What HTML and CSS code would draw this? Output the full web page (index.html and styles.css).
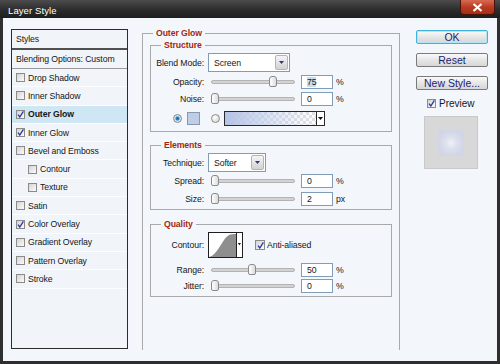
FILE: index.html
```
<!DOCTYPE html>
<html lang="en">
<head>
  <meta charset="UTF-8" />
  <title>Layer Style</title>
  <link rel="stylesheet" href="styles.css">
</head>
<body>
  <div class="window">
    <div class="titlebar">
      <span class="title">Layer Style</span>
      <div class="close">
        <svg width="11" height="9" viewBox="0 0 11 9"><path d="M1.5 1 L9.5 8 M9.5 1 L1.5 8" stroke="#fff" stroke-width="2.2"/></svg>
      </div>
    </div>

    <div class="client">
      <!-- list of effects -->
      <div class="styles-panel">
        <div class="panel-head">Styles</div>
        <div class="panel-blend">Blending Options: Custom</div>
        <ul class="effects">
          <li><span class="cb"></span>Drop Shadow</li>
          <li><span class="cb"></span>Inner Shadow</li>
          <li class="active"><span class="cb checked"><svg width="7" height="7" viewBox="0 0 7 7"><path d="M1 3.6 L2.8 6 L6.4 0.4"/></svg></span>Outer Glow</li>
          <li><span class="cb checked"><svg width="7" height="7" viewBox="0 0 7 7"><path d="M1 3.6 L2.8 6 L6.4 0.4"/></svg></span>Inner Glow</li>
          <li><span class="cb"></span>Bevel and Emboss</li>
          <li class="sub-item"><span class="cb"></span>Contour</li>
          <li class="sub-item"><span class="cb"></span>Texture</li>
          <li><span class="cb"></span>Satin</li>
          <li><span class="cb checked"><svg width="7" height="7" viewBox="0 0 7 7"><path d="M1 3.6 L2.8 6 L6.4 0.4"/></svg></span>Color Overlay</li>
          <li><span class="cb"></span>Gradient Overlay</li>
          <li><span class="cb"></span>Pattern Overlay</li>
          <li><span class="cb"></span>Stroke</li>
        </ul>
      </div>

      <!-- settings -->
      <div class="group main">
        <div class="legend">Outer Glow</div>

        <div class="group sub structure">
          <div class="legend">Structure</div>
          <div class="row tall r-blend">
            <span class="label">Blend Mode:</span>
            <div class="select wide">Screen<span class="select-btn"><svg width="5" height="3" viewBox="0 0 5 3"><path d="M0 0 H5 L2.5 3Z" fill="#2c3a7a"/></svg></span></div>
          </div>
          <div class="row r-opacity">
            <span class="label">Opacity:</span>
            <div class="slider"><div class="track"><span class="thumb" style="left: 74%"></span></div></div>
            <div class="num"><span class="sel">75</span></div>
            <span class="unit">%</span>
          </div>
          <div class="row r-noise">
            <span class="label">Noise:</span>
            <div class="slider"><div class="track"><span class="thumb" style="left: 0%"></span></div></div>
            <div class="num">0</div>
            <span class="unit">%</span>
          </div>
          <div class="row color-row">
            <span class="radio on"></span>
            <span class="swatch"></span>
            <span class="radio"></span>
            <div class="gradient"><span class="gradient-fill"></span><span class="gradient-btn"><svg width="5" height="3" viewBox="0 0 5 3"><path d="M0 0 H5 L2.5 3Z" fill="#111"/></svg></span></div>
          </div>
        </div>

        <div class="group sub elements">
          <div class="legend">Elements</div>
          <div class="row tall r-tech">
            <span class="label">Technique:</span>
            <div class="select narrow">Softer<span class="select-btn"><svg width="5" height="3" viewBox="0 0 5 3"><path d="M0 0 H5 L2.5 3Z" fill="#2c3a7a"/></svg></span></div>
          </div>
          <div class="row r-spread">
            <span class="label">Spread:</span>
            <div class="slider"><div class="track"><span class="thumb" style="left: 0%"></span></div></div>
            <div class="num">0</div>
            <span class="unit">%</span>
          </div>
          <div class="row r-size">
            <span class="label">Size:</span>
            <div class="slider"><div class="track"><span class="thumb" style="left: 0%"></span></div></div>
            <div class="num">2</div>
            <span class="unit">px</span>
          </div>
        </div>

        <div class="group sub quality">
          <div class="legend">Quality</div>
          <div class="row contour-row">
            <span class="label">Contour:</span>
            <div class="contour">
              <svg width="33" height="24" viewBox="0 0 33 24">
                <rect width="33" height="24" fill="#fff"/>
                <path d="M0 24 C 9 22, 13 6, 20 2 C 22 1, 24 1, 27 1 L27 24 Z" fill="#8e8e8e"/>
                <path d="M27.5 0 V24" stroke="#222" stroke-width="1"/>
                <path d="M28.8 10 H32 L30.4 12.2Z" fill="#111"/>
              </svg>
            </div>
            <span class="cb checked aa"><svg width="7" height="7" viewBox="0 0 7 7"><path d="M1 3.6 L2.8 6 L6.4 0.4"/></svg></span>
            <span class="aa-text">Anti-aliased</span>
          </div>
          <div class="row r-range">
            <span class="label">Range:</span>
            <div class="slider"><div class="track"><span class="thumb" style="left: 49%"></span></div></div>
            <div class="num">50</div>
            <span class="unit">%</span>
          </div>
          <div class="row r-jitter">
            <span class="label">Jitter:</span>
            <div class="slider"><div class="track"><span class="thumb" style="left: 0%"></span></div></div>
            <div class="num">0</div>
            <span class="unit">%</span>
          </div>
        </div>
      </div>

      <!-- buttons -->
      <div class="actions">
        <div class="btn default">OK</div>
        <div class="btn">Reset</div>
        <div class="btn">New Style...</div>
        <div class="preview-check">
          <span class="cb checked"><svg width="7" height="7" viewBox="0 0 7 7"><path d="M1 3.6 L2.8 6 L6.4 0.4"/></svg></span>
          <span>Preview</span>
        </div>
        <div class="preview">
          <div class="preview-swatch"></div>
        </div>
      </div>
    </div>
  </div>
</body>
</html>
```

FILE: styles.css
```
body {
  margin: 0;
  font-family: "Liberation Sans", Arial, sans-serif;
  font-size: 8.7px;
  letter-spacing: -0.1px;
  color: #161616;
}

.window {
  width: 500px;
  height: 364px;
  display: flex;
  flex-direction: column;
  background: #2e2e2e;
}

.titlebar {
  height: 18px;
  display: flex;
  justify-content: space-between;
  align-items: flex-start;
  background: linear-gradient(#4c4c4c, #2c2c2c 55%, #1d1d1d);
}

.title {
  color: #fff;
  font-size: 9.5px;
  padding: 5px 0 0 8px;
  letter-spacing: 0.1px;
}

.close {
  width: 35px;
  height: 15px;
  margin-right: 5px;
  box-sizing: border-box;
  border: 1px solid #4a1208;
  border-top: none;
  border-radius: 0 0 4px 4px;
  background: linear-gradient(#d86a52, #b93b22 50%, #a52d17);
  display: flex;
  align-items: center;
  justify-content: center;
}

.client {
  flex: 1;
  margin: 0 3px 3px 3px;
  background: #f3f7fb;
  display: flex;
  align-items: flex-start;
}

/* left list */

.styles-panel {
  width: 117px;
  height: 320px;
  margin: 11px 0 0 8px;
  box-sizing: border-box;
  border: 1px solid #2c2c2c;
  background: #f1f5fa;
}

.panel-head,
.panel-blend {
  height: 18px;
  line-height: 18px;
  padding-left: 4px;
}

.panel-head {
  border-bottom: 2px solid #505050;
}

.panel-blend {
  border-bottom: 1px solid #9a9a9a;
}

.effects {
  list-style: none;
  margin: 0;
  padding: 0;
}

.effects li {
  height: 17.3px;
  display: flex;
  align-items: center;
  padding-left: 4px;
  border-bottom: 1px solid #fdfeff;
}

.effects li.active {
  background: #cfe7f4;
  font-weight: bold;
}

.effects li.sub-item {
  padding-left: 16px;
}

.cb {
  width: 9px;
  height: 9px;
  box-sizing: border-box;
  border: 1px solid #8a8a8a;
  background: linear-gradient(135deg, #d4d4d4, #fbfbfb);
  margin-right: 3px;
  display: flex;
  align-items: center;
  justify-content: center;
  flex: none;
}

.cb svg path {
  fill: none;
  stroke: #2838a0;
  stroke-width: 1.3;
}

/* groups */

.group {
  box-sizing: border-box;
  border: 1px solid #a9a9a9;
}

.legend {
  width: fit-content;
  height: 12px;
  line-height: 12px;
  margin-top: -7px;
  padding: 0 3px;
  background: #f3f7fb;
  color: #a3260f;
  font-weight: bold;
}

.main {
  width: 258px;
  height: 317px;
  margin: 15px 0 0 14px;
  padding: 0 7px;
  border-bottom: none;
}

.main > .legend {
  margin-left: 3px;
}

.sub .legend {
  margin-left: 10px;
}

.structure {
  margin-top: 6px;
  padding-bottom: 5px;
}

.elements {
  margin-top: 13px;
  padding-bottom: 3px;
}

.quality {
  margin-top: 14px;
  padding-bottom: 3px;
}

.row {
  display: flex;
  align-items: center;
  height: 14px;
}

.row.tall {
  height: 19px;
}

.r-blend, .r-tech, .contour-row { margin-top: 2px; }
.r-opacity, .r-noise { margin-top: 3px; }
.r-spread { margin-top: 2px; }
.r-size { margin-top: 4px; }
.r-range { margin-top: 5px; }
.r-jitter { margin-top: 2px; }

.label {
  width: 53px;
  margin-right: 4px;
  text-align: right;
}

.select {
  height: 19px;
  box-sizing: border-box;
  border: 1px solid #7f9db9;
  background: #fff;
  display: flex;
  align-items: center;
  justify-content: space-between;
  padding-left: 5px;
}

.select.wide { width: 82px; }
.select.narrow { width: 58px; }

.select-btn {
  width: 13px;
  height: 15px;
  margin-right: 1px;
  box-sizing: border-box;
  border: 1px solid #a8b6c8;
  border-radius: 2px;
  background: linear-gradient(#f5f5f5, #d2d2d2);
  display: flex;
  align-items: center;
  justify-content: center;
}

.slider {
  width: 93px;
}

.track {
  position: relative;
  height: 4px;
  margin: 0 6px 0 3px;
  box-sizing: border-box;
  border: 1px solid #b3b3b3;
  border-radius: 2px;
  background: #d3d3d3;
}

.thumb {
  position: absolute;
  top: -5px;
  width: 8px;
  height: 11px;
  margin-left: -4px;
  box-sizing: border-box;
  border: 1px solid #8a8a8a;
  border-radius: 3px 3px 2px 2px;
  background: linear-gradient(90deg, #fff, #dcdcdc);
}

.r-noise .thumb, .r-spread .thumb, .r-size .thumb, .r-jitter .thumb {
  margin-left: -1px;
}

.num {
  width: 32px;
  height: 14px;
  box-sizing: border-box;
  border: 1px solid #7f9db9;
  background: #fff;
  padding-left: 5px;
  line-height: 12px;
}

.sel {
  background: #c3def4;
}

.unit {
  margin-left: 3px;
}

.color-row {
  height: 16px;
  margin-top: 4px;
}

.radio {
  width: 9px;
  height: 9px;
  box-sizing: border-box;
  border: 1px solid #8a8a8a;
  border-radius: 50%;
  background: radial-gradient(circle at 35% 35%, #fff, #cfcfcf);
  margin-left: 11px;
}

.radio.on {
  margin-left: 22px;
  background: radial-gradient(circle, #0a5fa8 0, #2b8ad0 30%, #dfe8ef 55%, #b9c2cc);
}

.swatch {
  width: 13px;
  height: 13px;
  box-sizing: border-box;
  border: 1px solid #8b97aa;
  background: #bfcde6;
  margin-left: 5px;
}

.gradient {
  width: 101px;
  height: 15px;
  margin-left: 4px;
  box-sizing: border-box;
  border: 1px solid #2a2a2a;
  display: flex;
  background: repeating-conic-gradient(#e1e1e1 0 25%, #fff 0 50%) 0 0 / 6px 6px;
}

.gradient-fill {
  flex: 1;
  background: linear-gradient(90deg, #b4c3e6, rgba(190, 205, 235, 0.6) 45%, rgba(255, 255, 255, 0));
}

.gradient-btn {
  width: 7px;
  border-left: 1px solid #2a2a2a;
  background: #fff;
  display: flex;
  align-items: center;
  justify-content: center;
}

.contour-row {
  height: 26px;
}

.contour {
  width: 35px;
  height: 26px;
  box-sizing: border-box;
  border: 1px solid #1e1e1e;
  display: flex;
}

.cb.aa {
  width: 10px;
  height: 10px;
  margin-left: 12px;
  margin-right: 2px;
}

/* right column */

.actions {
  width: 72px;
  margin: 12px 0 0 16px;
}

.btn {
  height: 14px;
  box-sizing: border-box;
  border: 1px solid #7a7a7a;
  border-radius: 2px;
  background: linear-gradient(#fafafa, #e6e6e6 50%, #d6d6d6);
  color: #1d1d74;
  font-size: 10.5px;
  letter-spacing: 0;
  display: flex;
  align-items: center;
  justify-content: center;
  margin-bottom: 9px;
}

.btn.default {
  border-color: #3fb2de;
  box-shadow: inset 0 0 0 1px #b4e5f6;
}

.preview-check {
  display: flex;
  align-items: center;
  margin: -1px 0 0 11px;
  height: 10px;
  font-size: 10px;
  letter-spacing: 0;
}

.preview-check .cb {
  margin-right: 3px;
}

.preview {
  width: 54px;
  height: 53px;
  margin: 8px 0 0 8px;
  box-sizing: border-box;
  border: 1px solid #c9c9c9;
  background: #d8d8d8;
  display: flex;
  align-items: center;
  justify-content: center;
}

.preview-swatch {
  width: 26px;
  height: 26px;
  background: radial-gradient(circle, #eef0f8 0, #dcdfec 35%, #d2d5e6 70%);
}
```
